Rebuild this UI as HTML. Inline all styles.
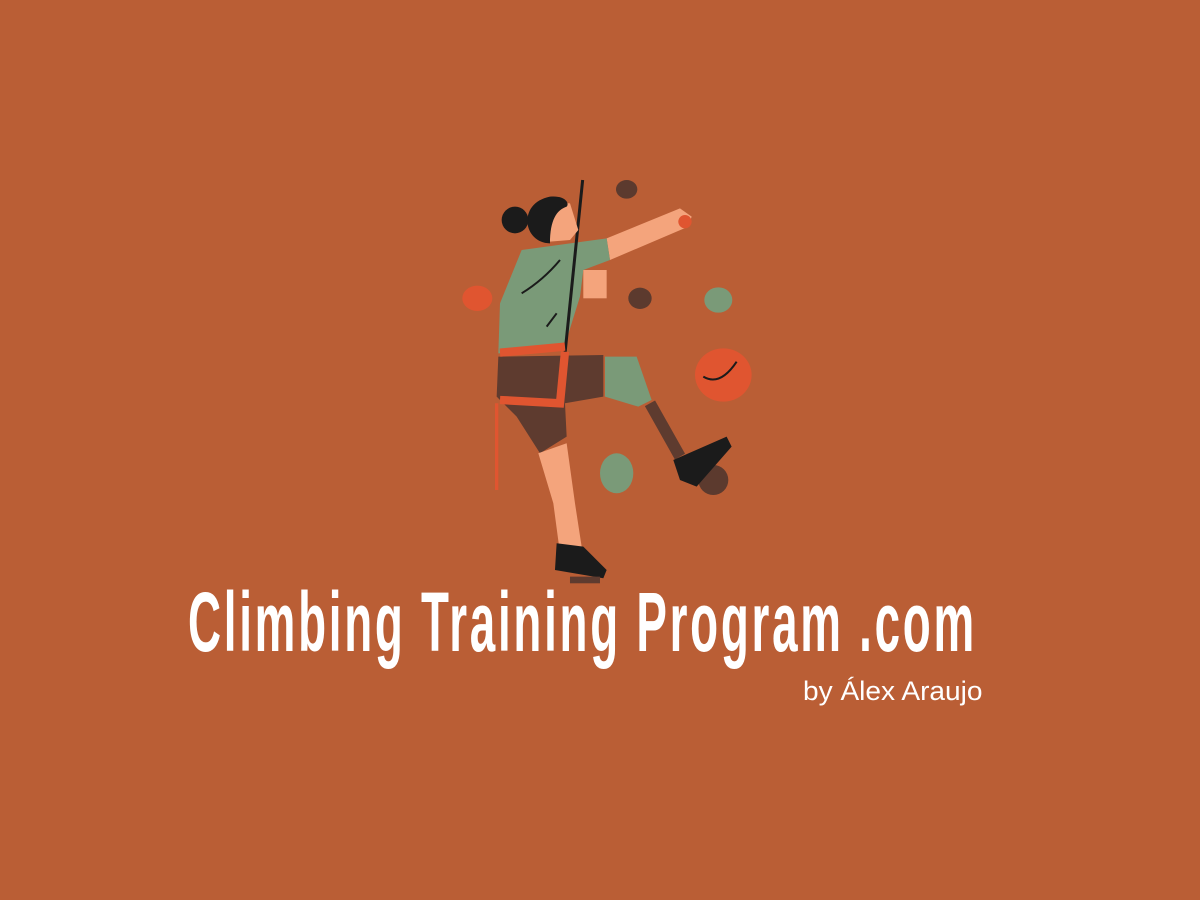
<!DOCTYPE html>
<html><head><meta charset="utf-8"><style>
html,body{margin:0;padding:0;background:#BA5E35;width:1200px;height:900px;overflow:hidden;position:relative}
.t{position:absolute;left:188px;top:574px;font-family:"Liberation Sans Narrow","Liberation Sans",sans-serif;font-weight:bold;font-size:84px;color:#fff;white-space:nowrap;transform-origin:0 0;transform:scaleX(0.545);letter-spacing:5px}
.b{position:absolute;left:803px;top:676px;font-family:"Liberation Sans",sans-serif;font-size:27px;color:#fff;white-space:nowrap;transform-origin:0 0;transform:scaleX(1.04)}
</style></head><body>
<svg width="1200" height="900" style="position:absolute;left:0;top:0">
<g transform="translate(450,170) scale(0.3333)">
<ellipse cx="530" cy="58" rx="32" ry="28" fill="#5c3a2e"/>
<ellipse cx="82" cy="385" rx="45" ry="38" fill="#e05530"/>
<ellipse cx="570" cy="385" rx="35" ry="32" fill="#5c3a2e"/>
<ellipse cx="805" cy="390" rx="42" ry="38" fill="#7a9a78"/>
<ellipse cx="820" cy="615" rx="85" ry="80" fill="#e05530"/>
<path d="M760 620 Q810 650 860 575" stroke="#1b1b1b" stroke-width="6" fill="none"/>
<ellipse cx="500" cy="910" rx="50" ry="60" fill="#7a9a78"/>
<ellipse cx="790" cy="930" rx="45" ry="45" fill="#5c3a2e"/>
<line x1="140" y1="700" x2="140" y2="960" stroke="#e05530" stroke-width="10"/>
<polygon points="470,205 690,115 725,140 715,170 480,270" fill="#f4a47c"/>
<circle cx="705" cy="155" r="20" fill="#e05530"/>
<polygon points="215,240 470,205 480,270 400,300 390,380 340,540 145,550 150,400" fill="#7a9a78"/>
<line x1="398" y1="30" x2="345" y2="550" stroke="#1b1b1b" stroke-width="9"/>
<rect x="400" y="300" width="70" height="85" fill="#f4a47c"/>
<path d="M215 370 Q280 330 330 270 M290 470 L320 430" stroke="#1b1b1b" stroke-width="6" fill="none"/>
<polygon points="290,95 360,100 385,180 360,210 300,215" fill="#f4a47c"/>
<path d="M300 220 C220 220 200 100 300 80 C345 75 360 100 350 110 C320 120 300 150 300 220Z" fill="#1b1b1b"/>
<circle cx="195" cy="150" r="40" fill="#1b1b1b"/>
<polygon points="145,560 460,555 460,680 345,700 350,800 270,850 200,740 140,680" fill="#5e3b2f"/>
<path d="M150 548 L345 530 M345 545 L330 700 L150 690" stroke="#e05530" stroke-width="25" fill="none"/>
<polygon points="465,560 560,560 605,690 565,710 465,680" fill="#7a9a78"/>
<line x1="600" y1="700" x2="690" y2="860" stroke="#5e3b2f" stroke-width="35"/>
<polygon points="670,870 830,800 845,830 740,950 690,930" fill="#1b1b1b"/>
<polygon points="265,850 350,820 375,1000 395,1130 330,1150 310,1000" fill="#f4a47c"/>
<polygon points="320,1120 400,1130 470,1200 460,1225 315,1200" fill="#1b1b1b"/>
<rect x="360" y="1220" width="90" height="20" fill="#5e3b2f"/>
</g></svg>
<div class="t">Climbing Training Program .com</div>
<div class="b">by Álex Araujo</div>
</body></html>
